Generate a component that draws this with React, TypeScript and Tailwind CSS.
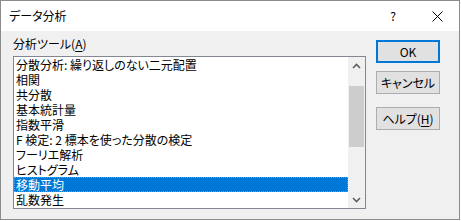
import React from 'react'

const ITEMS = [
  '分散分析: 繰り返しのない二元配置',
  '相関',
  '共分散',
  '基本統計量',
  '指数平滑',
  'F 検定: 2 標本を使った分散の検定',
  'フーリエ解析',
  'ヒストグラム',
  '移動平均',
  '乱数発生',
]

const SELECTED = 8

function DialogButton({ children, focused }: { children: React.ReactNode; focused?: boolean }) {
  return (
    <button
      type="button"
      className={
        'w-[64px] h-[23px] bg-[#e1e1e1] text-[12px] leading-none text-black flex items-center justify-center ' +
        (focused ? 'border-2 border-[#0078d7]' : 'border border-[#adadad]')
      }
    >
      {children}
    </button>
  )
}

function ScrollBar() {
  return (
    <div className="w-[17px] h-full bg-[#f0f0f0] flex flex-col">
      <div className="h-[17px] flex items-center justify-center">
        <svg width="9" height="6" viewBox="0 0 9 6">
          <path d="M1 5 L4.5 1.5 L8 5" fill="none" stroke="#606060" strokeWidth="1.6" />
        </svg>
      </div>
      <div className="flex-1 px-[1px] pt-[12px]">
        <div className="h-[61px] bg-[#cdcdcd]" />
      </div>
      <div className="h-[17px] flex items-center justify-center">
        <svg width="9" height="6" viewBox="0 0 9 6">
          <path d="M1 1 L4.5 4.5 L8 1" fill="none" stroke="#606060" strokeWidth="1.6" />
        </svg>
      </div>
    </div>
  )
}

export default function App() {
  return (
    <div className="w-[461px] h-[221px] bg-white font-['Noto_Sans_CJK_JP',sans-serif] [font-feature-settings:'palt'] text-black">
      <div className="w-[460px] h-[220px] border border-[#8c8c8c] flex flex-col">
        {/* title bar */}
        <div className="h-[30px] bg-white flex items-center pl-[8px] text-[12px]">
          <span className="flex-1">データ分析</span>
          <span className="w-[20px] text-center mr-[24px]">?</span>
          <span className="w-[20px] flex items-center justify-center mr-[12px]">
            <svg width="11" height="11" viewBox="0 0 11 11">
              <path d="M0.5 0.5 L10.5 10.5 M10.5 0.5 L0.5 10.5" stroke="#000" strokeWidth="1" />
            </svg>
          </span>
        </div>

        {/* body */}
        <div className="flex-1 bg-[#f0f0f0] flex pl-[12px]">
          <div className="flex flex-col">
            <div className="mt-[5px] h-[15px] leading-[15px] text-[12px]">
              分析ツール(<span className="underline underline-offset-2">A</span>)
            </div>
            <div className="mt-[5px] w-[353px] h-[153px] border border-[#828790] bg-white flex">
              <div className="flex-1 flex flex-col">
                {ITEMS.map((item, i) => (
                  <div
                    key={item}
                    className={
                      'h-[15px] leading-[15px] text-[12px] pl-[2px] whitespace-nowrap ' +
                      (i === SELECTED ? 'bg-[#0078d7] text-white outline outline-1 outline-dotted outline-[#5aa0e0] -outline-offset-1' : '')
                    }
                  >
                    {item}
                  </div>
                ))}
              </div>
              <ScrollBar />
            </div>
          </div>

          <div className="ml-[10px] pt-[9px] flex flex-col">
            <DialogButton focused>OK</DialogButton>
            <div className="mt-[8px]">
              <DialogButton>キャンセル</DialogButton>
            </div>
            <div className="mt-[13px]">
              <DialogButton>
                <span>
                  ヘルプ(<span className="underline underline-offset-2">H</span>)
                </span>
              </DialogButton>
            </div>
          </div>
        </div>
      </div>
    </div>
  )
}
